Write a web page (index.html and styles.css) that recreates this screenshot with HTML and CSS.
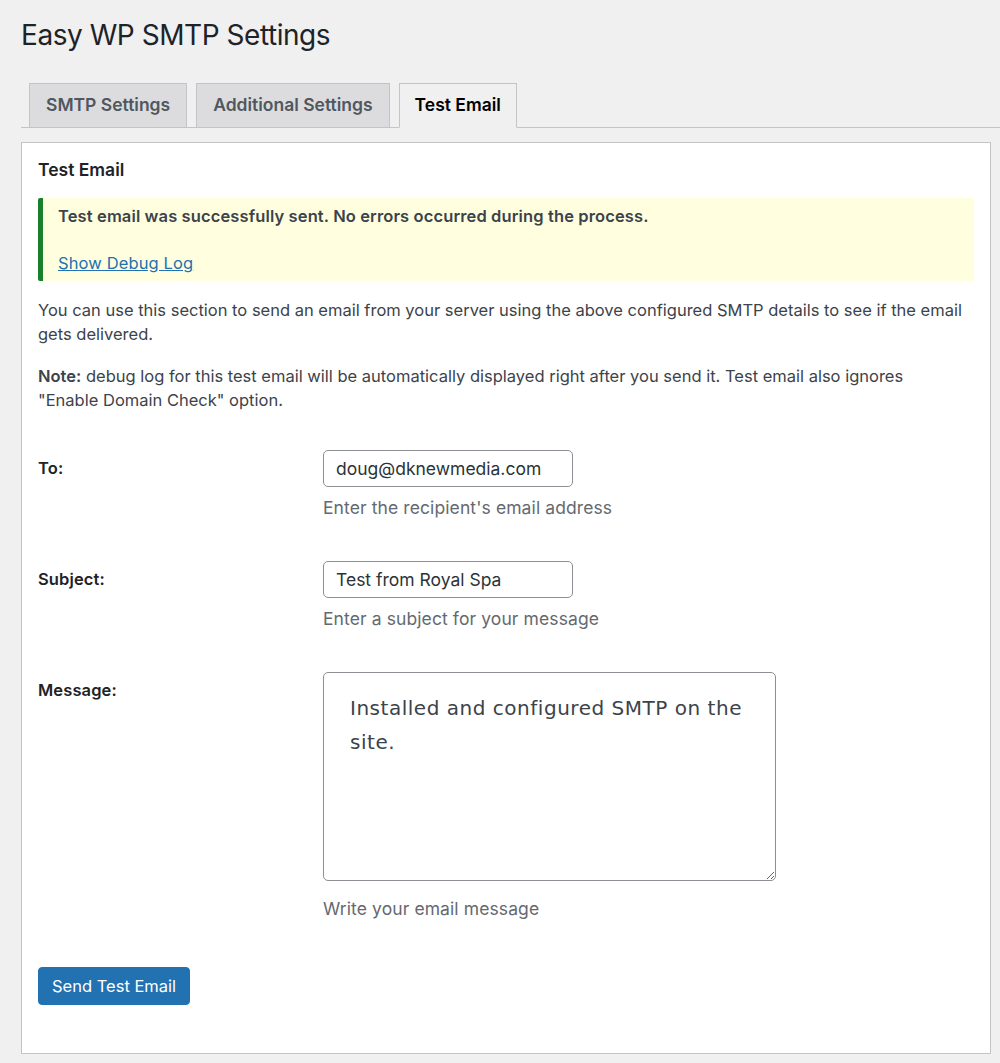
FILE: index.html
```html
<!DOCTYPE html>
<html lang="en">
<head>
<meta charset="utf-8">
<title>Easy WP SMTP Settings</title>
<link rel="stylesheet" href="styles.css">
</head>
<body>
<div class="wrap">
  <h1 class="page-title">Easy WP SMTP Settings</h1>
  <nav class="tabs">
    <a class="tab">SMTP Settings</a>
    <a class="tab">Additional Settings</a>
    <a class="tab tab-active">Test Email</a>
  </nav>
  <div class="panel">
    <h3 class="panel-title">Test Email</h3>
    <div class="notice">
      <p class="notice-strong">Test email was successfully sent. No errors occurred during the process.</p>
      <p class="notice-link"><a href="#">Show Debug Log</a></p>
    </div>
    <p class="intro">You can use this section to send an email from your server using the above configured SMTP details to see if the email gets delivered.</p>
    <p class="intro"><strong>Note:</strong> debug log for this test email will be automatically displayed right after you send it. Test email also ignores "Enable Domain Check" option.</p>
    <div class="form">
      <div class="row">
        <div class="label">To:</div>
        <div class="field">
          <input class="text-input" type="text" value="doug@dknewmedia.com">
          <p class="desc">Enter the recipient's email address</p>
        </div>
      </div>
      <div class="row">
        <div class="label">Subject:</div>
        <div class="field">
          <input class="text-input" type="text" value="Test from Royal Spa">
          <p class="desc">Enter a subject for your message</p>
        </div>
      </div>
      <div class="row">
        <div class="label">Message:</div>
        <div class="field">
          <textarea class="message">Installed and configured SMTP on the site.</textarea>
          <p class="desc">Write your email message</p>
        </div>
      </div>
    </div>
    <div class="submit">
      <button class="button-primary" type="button">Send Test Email</button>
    </div>
  </div>
</div>
</body>
</html>
```
FILE: styles.css
```css
html, body {
  margin: 0;
  padding: 0;
  background: #f0f0f1;
}
body {
  font-family: Inter, "Noto Sans", "Liberation Sans", sans-serif;
  color: #3c434a;
  font-size: 16.5px;
  letter-spacing: 0.12px;
  line-height: 1.5;
}
.wrap {
  padding-left: 21px;
  padding-top: 15px;
}
.page-title {
  margin: 0;
  font-size: 28px;
  font-weight: 400;
  letter-spacing: -0.45px;
  line-height: 41px;
  color: #1d2327;
}
.tabs {
  display: flex;
  gap: 9px;
  margin-top: 27px;
  padding-left: 8px;
  border-bottom: 1px solid #c3c4c7;
  height: 44px;
}
.tab {
  display: flex;
  align-items: center;
  box-sizing: border-box;
  height: 45px;
  padding: 0 16px;
  background: #dcdcde;
  border: 1px solid #c3c4c7;
  color: #50575e;
  font-size: 17.5px;
  font-weight: 600;
  letter-spacing: 0;
  text-decoration: none;
}
.tab-active {
  padding: 0 15px;
  background: #f0f0f1;
  color: #000;
  border-bottom-color: #f0f0f1;
}
.panel {
  margin-top: 14px;
  margin-right: 9px;
  background: #fff;
  border: 1px solid #c3c4c7;
  box-shadow: 0 1px 1px rgba(0,0,0,0.04);
  padding: 0 16px 48px;
}
.panel-title {
  margin: 0;
  padding-top: 14px;
  font-size: 17.5px;
  font-weight: 600;
  letter-spacing: 0;
  line-height: 26px;
  color: #1d2327;
}
.notice {
  margin-top: 15px;
  background: #ffffe0;
  border-left: 5px solid #1a7f2a;
  border-radius: 2px;
  padding: 5px 15px 5px 15px;
}
.notice p {
  margin: 0;
}
.notice-strong {
  font-weight: 600;
  line-height: 26px;
  color: #3c434a;
}
.notice-link {
  margin-top: 21px !important;
  line-height: 26px;
}
.notice-link a {
  color: #2271b1;
  text-decoration: underline;
}
.intro {
  margin: 17px 0 0;
  padding-right: 7px;
  letter-spacing: 0;
  line-height: 24px;
}
.intro + .intro {
  margin-top: 18px;
}
.intro strong {
  font-weight: 600;
}
.form {
  margin-top: 18px;
}
.row {
  display: grid;
  grid-template-columns: 285px 1fr;
  padding: 20px 0;
}
.label {
  padding-top: 6px;
  font-size: 16.5px;
  font-weight: 600;
  line-height: 24px;
  color: #1d2327;
}
.field {
  display: flex;
  flex-direction: column;
  align-items: flex-start;
}
.text-input {
  box-sizing: border-box;
  width: 250px;
  height: 37px;
  padding: 0 12px;
  border: 1px solid #8c8f94;
  border-radius: 5px;
  font-family: Inter, "Noto Sans", sans-serif;
  font-size: 17.5px;
  color: #2c3338;
  background: #fff;
}
.desc {
  margin: 8px 0 0;
  font-size: 17.5px;
  letter-spacing: 0.1px;
  line-height: 26px;
  color: #646970;
}
.message {
  box-sizing: border-box;
  width: 453px;
  height: 209px;
  padding: 18px 26px;
  border: 1px solid #8c8f94;
  border-radius: 5px;
  font-family: "DejaVu Sans", "Open Sans", sans-serif;
  font-size: 20px;
  letter-spacing: 0.52px;
  line-height: 34px;
  color: #3c434a;
  resize: vertical;
  background: #fff;
}
.message + .desc {
  margin-top: 15px;
}
.submit {
  margin-top: 25px;
}
.button-primary {
  box-sizing: border-box;
  height: 38px;
  padding: 0 13px;
  background: #2271b1;
  border: 1px solid #2271b1;
  border-radius: 4px;
  color: #fff;
  font-family: Inter, "Noto Sans", sans-serif;
  font-size: 16.5px;
  line-height: 36px;
}
```
